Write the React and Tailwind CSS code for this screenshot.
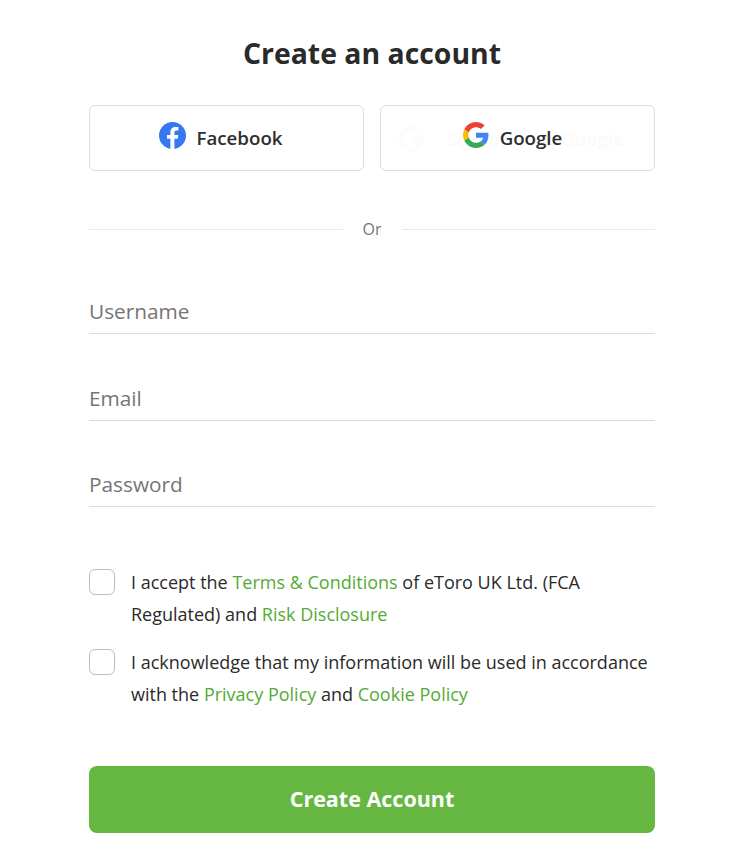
const font = { fontFamily: '"Open Sans", sans-serif' }

function FacebookIcon() {
  return (
    <svg width="27" height="27" viewBox="0 0 27 27" className="shrink-0 mb-[6px]">
      <circle cx="13.5" cy="13.5" r="13.5" fill="#3578f0" />
      <path
        d="M15.4 27v-10.2h3.3l.6-3.900h-3.900v-2.400c0-1.100.5-2 2.100-2h1.900V5.100c-.8-.1-1.800-.2-2.800-.2-3.200 0-5.200 1.900-5.200 5.300v2.700H8v3.900h3.400V27z"
        fill="#fff"
      />
    </svg>
  )
}

function GoogleIcon({ size = 26, className = '' }) {
  return (
    <svg width={size} height={size} viewBox="0 0 48 48" className={`shrink-0 ${className}`}>
      <path fill="#EA4335" d="M24 9.500c3.500 0 6.700 1.200 9.200 3.600l6.900-6.900C35.900 2.400 30.500 0 24 0 14.600 0 6.500 5.400 2.600 13.200l8 6.200C12.500 13.600 17.800 9.500 24 9.500z" />
      <path fill="#4285F4" d="M47 24.500c0-1.600-.1-3.100-.4-4.500H24v9h12.900c-.6 3-2.200 5.500-4.700 7.200l7.700 6c4.500-4.200 7.100-10.300 7.100-17.700z" />
      <path fill="#FBBC05" d="M10.600 28.600c-.5-1.400-.8-3-.8-4.600s.3-3.200.8-4.600l-8-6.200C.9 16.500 0 20.100 0 24s.9 7.500 2.600 10.800l8-6.200z" />
      <path fill="#34A853" d="M24 48c6.500 0 11.900-2.100 15.900-5.800l-7.700-6c-2.200 1.400-4.900 2.300-8.200 2.300-6.200 0-11.500-4.100-13.400-9.900l-8 6.200C6.500 42.600 14.600 48 24 48z" />
    </svg>
  )
}

function Field({ label, className }) {
  return (
    <label className={`block border-b border-[#dcdcdc] h-[44px] ${className}`}>
      <input
        placeholder={label}
        className="w-full h-[41px] bg-transparent outline-none text-[20.8px] text-[#2a2a2a] placeholder:text-[#757575]"
      />
    </label>
  )
}

function Check({ children, className }) {
  return (
    <label className={`flex items-start gap-[16px] text-[18px] leading-[32px] text-[#2a2a2a] ${className}`}>
      <input
        type="checkbox"
        className="appearance-none shrink-0 w-[26px] h-[26px] mt-[3px] bg-white border border-[#bdbdbd] rounded-[6px]"
      />
      <span>{children}</span>
    </label>
  )
}

function Link({ children }) {
  return <a href="#" className="text-[#54ab33]">{children}</a>
}

export default function App() {
  return (
    <div style={font} className="min-h-[858px] bg-white pl-[89px] pr-[95px] pt-[30px] antialiased">
      <h1 className="text-[28.4px] leading-[46px] font-bold text-center text-[#2a2a2a]">Create an account</h1>

      <div className="flex gap-[16px] mt-[29px]">
        <button className="w-[275px] h-[66px] pr-[12px] flex items-center justify-center gap-[11px] bg-white border border-[#dcdcdc] rounded-[6px] text-[18.7px] font-semibold text-[#2e2e2e]">
          <FacebookIcon />
          Facebook
        </button>
        <button className="relative w-[275px] h-[66px] pr-[10px] flex items-center justify-center bg-white border border-[#dcdcdc] rounded-[6px] text-[18.7px] font-semibold text-[#2e2e2e]">
          <span className="absolute left-[17px] top-[19px] flex items-center gap-[22px] opacity-[0.015] whitespace-nowrap">
            <GoogleIcon />
            Sign up with Google
          </span>
          <span className="relative flex items-center gap-[11px]">
            <GoogleIcon className="mb-[6px]" />
            Google
          </span>
        </button>
      </div>

      <div className="flex items-center mt-[48px] h-[20px]">
        <div className="flex-1 border-t border-[#e8e8e8]" />
        <span className="px-[20px] text-[16px] text-[#757575]">Or</span>
        <div className="flex-1 border-t border-[#e8e8e8]" />
      </div>

      <Field label="Username" className="mt-[51px]" />
      <Field label="Email" className="mt-[43px]" />
      <Field label="Password" className="mt-[42px]" />

      <Check className="mt-[59px]">
        I accept the <Link>Terms &amp; Conditions</Link> of eToro UK Ltd. (FCA Regulated) and <Link>Risk Disclosure</Link>
      </Check>
      <Check className="mt-[16px]">
        I acknowledge that my information will be used in accordance with the <Link>Privacy Policy</Link> and <Link>Cookie Policy</Link>
      </Check>

      <button className="block w-full h-[67px] mt-[56px] bg-[#65b741] rounded-[8px] text-[21.5px] font-bold text-white">
        Create Account
      </button>
    </div>
  )
}
